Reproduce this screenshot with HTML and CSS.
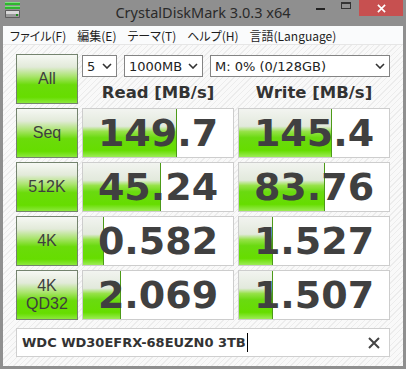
FILE: index.html
```html
<!DOCTYPE html>
<html lang="ja">
<head>
  <meta charset="UTF-8" />
  <title>CrystalDiskMark 3.0.3 x64</title>
  <link rel="stylesheet" href="styles.css">
</head>
<body>
  <div class="window">
    <div class="titlebar">
      <div class="title-left">
        <!-- app icon: two green bars over a grey drive -->
        <svg class="app-icon" viewBox="0 0 16 16" xmlns="http://www.w3.org/2000/svg">
          <rect x="0" y="0" width="15" height="3" fill="#2fb52f"/>
          <rect x="0" y="0" width="15" height="1" fill="#7fe07f"/>
          <rect x="0" y="4" width="15" height="3" fill="#2fb52f"/>
          <rect x="0" y="4" width="15" height="1" fill="#7fe07f"/>
          <rect x="0" y="8" width="15" height="8" rx="1" fill="#5d5d5d"/>
          <rect x="1" y="9" width="13" height="3" fill="#d8d8d8"/>
          <rect x="1" y="12" width="13" height="3" fill="#9a9a9a"/>
          <rect x="11" y="12" width="2" height="2" fill="#1e8a1e"/>
        </svg>
      </div>
      <div class="title">CrystalDiskMark 3.0.3 x64</div>
      <div class="controls">
        <span class="ctl"><span class="min-icon"></span></span>
        <span class="ctl"><span class="max-icon"></span></span>
        <span class="ctl close">
          <svg viewBox="0 0 10 10" width="9" height="9" xmlns="http://www.w3.org/2000/svg">
            <path d="M1 1 L9 9 M9 1 L1 9" stroke="#fff" stroke-width="1.8"/>
          </svg>
        </span>
      </div>
    </div>

    <div class="frame">
      <div class="menubar">
        <span>ファイル(F)</span>
        <span>編集(E)</span>
        <span>テーマ(T)</span>
        <span>ヘルプ(H)</span>
        <span>言語(Language)</span>
      </div>

      <div class="client">
        <div class="board">
          <div class="btn">All</div>
          <div class="top-area">
            <div class="selects">
              <div class="select s-count">5
                <svg class="chev" viewBox="0 0 10 6" xmlns="http://www.w3.org/2000/svg"><path d="M1 1 L5 5 L9 1" fill="none" stroke="#333" stroke-width="1.6"/></svg>
              </div>
              <div class="select s-size">1000MB
                <svg class="chev" viewBox="0 0 10 6" xmlns="http://www.w3.org/2000/svg"><path d="M1 1 L5 5 L9 1" fill="none" stroke="#333" stroke-width="1.6"/></svg>
              </div>
              <div class="select s-drive">M: 0% (0/128GB)
                <svg class="chev" viewBox="0 0 10 6" xmlns="http://www.w3.org/2000/svg"><path d="M1 1 L5 5 L9 1" fill="none" stroke="#333" stroke-width="1.6"/></svg>
              </div>
            </div>
            <div class="headers">
              <div>Read [MB/s]</div>
              <div>Write [MB/s]</div>
            </div>
          </div>

          <div class="btn">Seq</div>
          <div class="cell" style="--w:94px">149.7</div>
          <div class="cell" style="--w:93px">145.4</div>

          <div class="btn">512K</div>
          <div class="cell" style="--w:78px">45.24</div>
          <div class="cell" style="--w:86px">83.76</div>

          <div class="btn">4K</div>
          <div class="cell" style="--w:21px">0.582</div>
          <div class="cell" style="--w:34px">1.527</div>

          <div class="btn two-line">4K<br>QD32</div>
          <div class="cell" style="--w:38px">2.069</div>
          <div class="cell" style="--w:34px">1.507</div>
        </div>

        <div class="drive-field">
          <span class="drive-name">WDC WD30EFRX-68EUZN0 3TB</span><span class="caret"></span>
          <svg class="clear" viewBox="0 0 12 12" xmlns="http://www.w3.org/2000/svg">
            <path d="M1 1 L11 11 M11 1 L1 11" stroke="#444" stroke-width="2"/>
          </svg>
        </div>
      </div>
    </div>
  </div>
</body>
</html>
```

FILE: styles.css
```css
* {
  box-sizing: border-box;
}
html, body {
  margin: 0;
  padding: 0;
}
body {
  width: 406px;
  height: 369px;
  overflow: hidden;
  background-color: #8f8f8f;
  font-family: "DejaVu Sans", Verdana, sans-serif;
  color: #333;
}
.window {
  display: flex;
  flex-direction: column;
  height: 369px;
}
.titlebar {
  height: 26px;
  display: grid;
  grid-template-columns: 1fr auto 1fr;
  align-items: start;
}
.app-icon {
  display: block;
  width: 16px;
  height: 16px;
  margin: 2px 0 0 5px;
}
.title {
  font-family: "Noto Sans", "Open Sans", sans-serif;
  font-size: 14.5px;
  line-height: 24px;
  color: #2a2a2a;
}
.controls {
  justify-self: end;
  display: flex;
  margin-right: 3px;
}
.ctl {
  width: 26px;
  height: 16px;
  display: flex;
  align-items: center;
  justify-content: center;
}
.min-icon {
  width: 9px;
  height: 2px;
  margin-top: 1px;
  background-color: #222;
}
.max-icon {
  width: 10px;
  height: 7px;
  margin-top: -5px;
  border: 1px solid #333;
  border-top-width: 2px;
}
.close {
  width: 44px;
  background-color: #c75050;
}
.frame {
  flex: 1;
  display: flex;
  flex-direction: column;
  margin: 0 3px 3px;
}
.menubar {
  height: 19px;
  display: flex;
  align-items: center;
  gap: 11px;
  padding-left: 7px;
  background-color: #fafbfc;
  border-bottom: 1px solid #e6e6e6;
  font-family: "Noto Sans CJK JP", sans-serif;
  font-size: 12px;
  font-feature-settings: "palt";
  color: #1e1e1e;
}
.client {
  flex: 1;
  display: flex;
  flex-direction: column;
  padding: 9px 13px 0;
  background-color: #f9f9f9;
  background-image: repeating-linear-gradient(-45deg, #f9f9f9 0, #f9f9f9 3px, #ececec 3px, #ececec 4px);
}
.board {
  display: grid;
  grid-template-columns: 62px 152px 152px;
  grid-auto-rows: 50px;
  gap: 4px;
}
.btn {
  display: flex;
  align-items: center;
  justify-content: center;
  text-align: center;
  border: 1px solid #74836e;
  background: linear-gradient(to bottom, #f6f8f4 0%, #e2ead9 25%, #a8e46a 45%, #6bdb0a 62%, #66dd00 88%, #8ce83c 100%);
  font-family: "Liberation Sans", Arial, sans-serif;
  font-size: 16px;
  color: #3e3e3e;
}
.two-line {
  line-height: 18px;
}
.top-area {
  grid-column: 2 / 4;
  display: flex;
  flex-direction: column;
}
.selects {
  display: flex;
  justify-content: space-between;
  margin-top: 1px;
}
.select {
  height: 22px;
  display: flex;
  align-items: center;
  justify-content: space-between;
  padding: 0 4px 0 4px;
  background-color: #fff;
  border: 1px solid #848484;
  font-size: 13px;
  color: #222;
}
.s-count {
  width: 35px;
}
.s-size {
  width: 79px;
}
.s-drive {
  width: 180px;
}
.chev {
  width: 10px;
  height: 6px;
}
.headers {
  display: grid;
  grid-template-columns: 152px 152px;
  gap: 4px;
  margin-top: 6px;
  text-align: center;
  font-size: 16.5px;
  font-weight: bold;
  line-height: 20px;
  color: #333;
}
.cell {
  display: flex;
  align-items: center;
  justify-content: center;
  border: 1px solid #cdcdcd;
  background-color: #fff;
  background-image:
    linear-gradient(to right, transparent calc(100% - 1px), #4c9a18 calc(100% - 1px)),
    linear-gradient(to bottom, #f2f4f0 0%, #e2e9dc 36%, #96e248 47%, #6ada10 60%, #66dd00 86%, #9cec56 100%);
  background-size: var(--w) 100%;
  background-repeat: no-repeat;
  font-size: 38px;
  font-weight: bold;
  line-height: 1;
  color: #404040;
}
.drive-field {
  height: 29px;
  margin-top: 8px;
  display: flex;
  align-items: center;
  padding: 0 9px 0 5px;
  background-color: #fff;
  border: 1px solid #cfcfcf;
  font-size: 13px;
  font-weight: bold;
  color: #333;
}
.caret {
  width: 1px;
  height: 19px;
  margin-left: 1px;
  background-color: #000;
}
.clear {
  width: 12px;
  height: 12px;
  margin-left: auto;
}
```
